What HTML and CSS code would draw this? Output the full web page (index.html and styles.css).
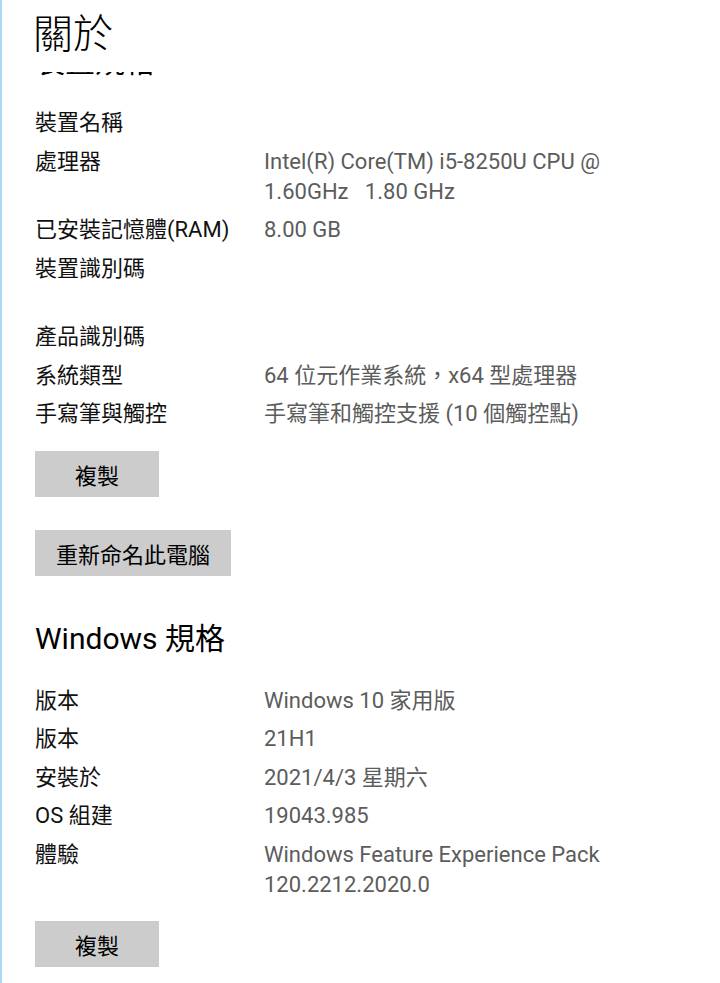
FILE: index.html
```html
<!DOCTYPE html>
<html lang="zh-TW">
<head>
    <meta charset="UTF-8">
    <title>關於</title>
    <link rel="stylesheet" href="styles.css">
</head>
<body>

<div class="page">
    <h1 class="title">關於</h1>

    <!-- 捲動後被標題蓋住的區段標題 -->
    <div class="clip">
        <h2 class="section-title">裝置規格</h2>
    </div>

    <div class="spec-list first">
        <div class="row">
            <div class="label">裝置名稱</div>
            <div class="value"></div>
        </div>
        <div class="row">
            <div class="label">處理器</div>
            <div class="value">Intel(R) Core(TM) i5-8250U CPU @<br>1.60GHz&nbsp;&nbsp;&nbsp;1.80 GHz</div>
        </div>
        <div class="row">
            <div class="label">已安裝記憶體(RAM)</div>
            <div class="value">8.00 GB</div>
        </div>
        <div class="row tall">
            <div class="label">裝置識別碼</div>
            <div class="value"></div>
        </div>
        <div class="row">
            <div class="label">產品識別碼</div>
            <div class="value"></div>
        </div>
        <div class="row">
            <div class="label">系統類型</div>
            <div class="value">64 位元作業系統，x64 型處理器</div>
        </div>
        <div class="row">
            <div class="label">手寫筆與觸控</div>
            <div class="value">手寫筆和觸控支援 (10 個觸控點)</div>
        </div>
    </div>

    <button class="btn">複製</button>
    <button class="btn rename">重新命名此電腦</button>

    <h2 class="section-title win">Windows 規格</h2>

    <div class="spec-list">
        <div class="row">
            <div class="label">版本</div>
            <div class="value">Windows 10 家用版</div>
        </div>
        <div class="row">
            <div class="label">版本</div>
            <div class="value">21H1</div>
        </div>
        <div class="row">
            <div class="label">安裝於</div>
            <div class="value">2021/4/3 星期六</div>
        </div>
        <div class="row">
            <div class="label">OS 組建</div>
            <div class="value">19043.985</div>
        </div>
        <div class="row">
            <div class="label">體驗</div>
            <div class="value">Windows Feature Experience Pack<br>120.2212.2020.0</div>
        </div>
    </div>

    <button class="btn">複製</button>
</div>

</body>
</html>
```

FILE: styles.css
```css
body {
    margin: 0;
    background: #fff;
    font-family: Roboto, "Noto Sans CJK TC", sans-serif;
    color: #000;
}

.page {
    min-height: 983px;
    box-sizing: border-box;
    border-left: 2px solid #a9daf3;
    padding-left: 33px;
    overflow: hidden;
}

.title {
    margin: 0 0 0 -2px;
    padding-top: 10px;
    font-size: 40px;
    line-height: 50px;
    font-weight: 300;
}

/* 只露出被蓋住標題的底部 */
.clip {
    display: flex;
    align-items: flex-end;
    height: 5px;
    margin-top: 12px;
    overflow: hidden;
}

.clip .section-title {
    flex-shrink: 0;
    margin-bottom: -5px;
}

.section-title {
    margin: 0;
    font-size: 30px;
    line-height: 40px;
    font-weight: 400;
}

.section-title.win {
    margin-top: 43px;
}

.spec-list {
    margin-top: 27px;
    margin-bottom: 21.5px;
}

.spec-list.first {
    margin-top: 31px;
}

.row {
    display: flex;
    font-size: 22px;
    line-height: 30px;
    margin-bottom: 8.5px;
}

.row.tall {
    margin-bottom: 38.5px; /* 空白的識別碼值 */
}

.label {
    width: 229px;
    flex-shrink: 0;
    color: #111;
}

.value {
    color: #5c5c5c;
    max-width: 380px;
}

.btn {
    display: block;
    min-width: 124px;
    height: 46px;
    padding: 0 21px;
    border: none;
    background: #cccccc;
    color: #000;
    font-family: Roboto, "Noto Sans CJK TC", sans-serif;
    font-size: 22px;
}

.btn.rename {
    margin-top: 33px;
}
```
